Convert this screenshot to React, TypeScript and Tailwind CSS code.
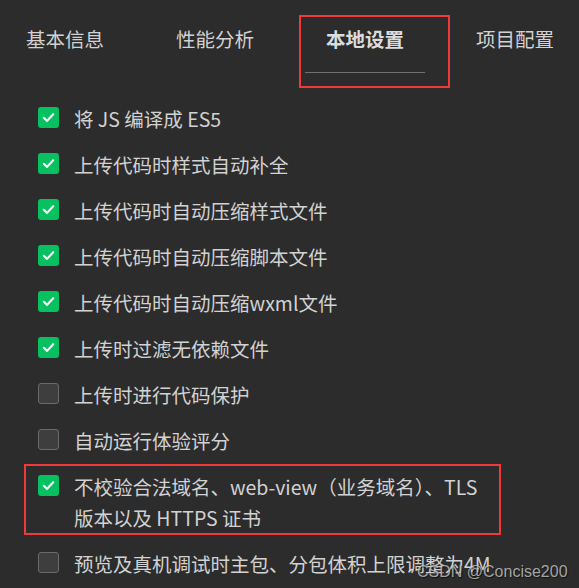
import React from "react";

const FONT = '"Noto Sans CJK SC", "Noto Sans", sans-serif';

const tabs = ["基本信息", "性能分析", "本地设置", "项目配置"];

const items: { label: string[]; checked: boolean; boxed?: boolean }[] = [
  { label: ["将 JS 编译成 ES5"], checked: true },
  { label: ["上传代码时样式自动补全"], checked: true },
  { label: ["上传代码时自动压缩样式文件"], checked: true },
  { label: ["上传代码时自动压缩脚本文件"], checked: true },
  { label: ["上传代码时自动压缩wxml文件"], checked: true },
  { label: ["上传时过滤无依赖文件"], checked: true },
  { label: ["上传时进行代码保护"], checked: false },
  { label: ["自动运行体验评分"], checked: false },
  {
    label: ["不校验合法域名、web-view（业务域名）、TLS", "版本以及 HTTPS 证书"],
    checked: true,
    boxed: true,
  },
  { label: ["预览及真机调试时主包、分包体积上限调整为4M"], checked: false },
];

function Box({ checked }: { checked: boolean }) {
  if (checked) {
    return (
      <div className="mt-[4px] flex h-[21px] w-[21px] shrink-0 items-center justify-center rounded-[3px] bg-[#07c160]">
        <svg width="15" height="15" viewBox="0 0 16 16" fill="none">
          <path d="M3 8.3 L6.5 11.6 L13 4.6" stroke="#ffffff" strokeWidth="2.2" strokeLinecap="round" strokeLinejoin="round" />
        </svg>
      </div>
    );
  }
  return <div className="mt-[4px] h-[21px] w-[21px] shrink-0 rounded-[3px] border border-[#6a6a6a] bg-[#3e3e3e]" />;
}

export default function App() {
  return (
    <div className="relative h-[588px] w-[579px] overflow-hidden bg-[#2c2c2c] text-[#d2d2d2]" style={{ fontFamily: FONT }}>
      {/* tabs */}
      <div className="-ml-[10px] flex h-[90px] pt-[23px]">
        {tabs.map((t, i) => (
          <div key={t} className="relative flex h-[32px] w-[150px] shrink-0 justify-center">
            <span className={`text-[19.5px] leading-[32px] ${i === 2 ? "font-bold text-[#dcdcdc]" : ""}`}>{t}</span>
            {i === 2 && <div className="absolute left-[15px] top-[49px] h-px w-[120px] bg-[#707070]" />}
          </div>
        ))}
      </div>
      {/* annotation box around active tab */}
      <div className="absolute left-[299px] top-[15px] h-[73px] w-[151px] border-2 border-[#f03a3a]" />

      {/* options */}
      <div className="flex flex-col gap-[15px] pl-[38px] pt-[13px]">
        {items.map((it, idx) => (
          <div key={idx} className="flex gap-[15px]">
            <Box checked={it.checked} />
            <div className="text-[19.5px] leading-[31px] whitespace-nowrap">
              {it.label.map((l) => (
                <div key={l}>{l}</div>
              ))}
            </div>
          </div>
        ))}
      </div>
      {/* annotation box around domain option */}
      <div className="absolute left-[24px] top-[464px] h-[71px] w-[477px] border-2 border-[#f03a3a]" />

      {/* watermark */}
      <div
        className="absolute left-[417px] top-[562px] text-[16px] leading-[20px] text-[#c8c8c8]/80"
        style={{ fontFamily: '"Liberation Sans", Arial, sans-serif', textShadow: "1px 1px 1px rgba(0,0,0,0.6)" }}
      >
        CSDN @Concise200
      </div>
    </div>
  );
}
